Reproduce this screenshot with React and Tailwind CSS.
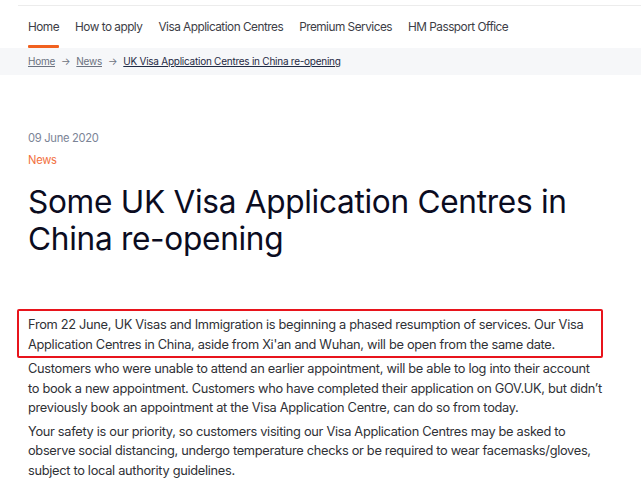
import React from 'react';

const navItems = ['Home', 'How to apply', 'Visa Application Centres', 'Premium Services', 'HM Passport Office'];

const App = () => {
  return (
    <div className="min-h-screen bg-white font-['Inter','Noto_Sans',sans-serif] pt-[5px]">
      {/* Top nav */}
      <div className="ml-[18px] border-t border-[#ececec]">
        <ul className="flex gap-[16px] pl-[10px] h-[42px]">
          {navItems.map((item, i) => (
            <li key={item} className="relative flex items-center pt-[1px] text-[11.8px] text-[#3d3d46] tracking-[-0.5px]">
              {item}
              {i === 0 && <span className="absolute left-0 right-0 bottom-0 h-[3px] bg-[#f1611f] rounded-[1px]"></span>}
            </li>
          ))}
        </ul>
      </div>

      {/* Breadcrumb */}
      <div className="bg-[#f6f7f9] h-[27px] flex items-center pl-[28px] text-[10px] text-[#6b7280] tracking-[-0.25px]">
        <span className="underline">Home</span>
        <span className="mx-[6px]">→</span>
        <span className="underline">News</span>
        <span className="mx-[6px]">→</span>
        <span className="underline text-[#1f2a44]">UK Visa Application Centres in China re-opening</span>
      </div>

      <main className="pl-[28px] pt-[53px]">
        <p className="text-[11.2px] text-[#7b8496] leading-[20px] tracking-[-0.3px]">09 June 2020</p>
        <p className="text-[11.2px] text-[#f2723f] leading-[20px] mt-[2px] tracking-[-0.3px]">News</p>

        <h1 className="mt-[13px] text-[31.6px] leading-[37px] text-[#0b0c1f] tracking-[-0.3px]">
          Some UK Visa Application Centres in
          <br />
          China re-opening
        </h1>

        <div className="mt-[52px] text-[12.8px] leading-[19.5px] text-[#2f3136] tracking-[-0.3px] whitespace-nowrap">
          <div className="-ml-[11px] w-[586px] border-2 border-[#e8141c] rounded-[2px] pl-[9px] pt-[4px] pb-[2px]">
            <p>
              From 22 June, UK Visas and Immigration is beginning a phased resumption of services. Our Visa
              <br />
              Application Centres in China, aside from Xi'an and Wuhan, will be open from the same date.
            </p>
          </div>
          <p className="mt-[1px]">
            Customers who were unable to attend an earlier appointment, will be able to log into their account
            <br />
            to book a new appointment. Customers who have completed their application on GOV.UK, but didn’t
            <br />
            previously book an appointment at the Visa Application Centre, can do so from today.
          </p>
          <p className="mt-[4px]">
            Your safety is our priority, so customers visiting our Visa Application Centres may be asked to
            <br />
            observe social distancing, undergo temperature checks or be required to wear facemasks/gloves,
            <br />
            subject to local authority guidelines.
          </p>
        </div>
      </main>
    </div>
  );
};

export default App;
